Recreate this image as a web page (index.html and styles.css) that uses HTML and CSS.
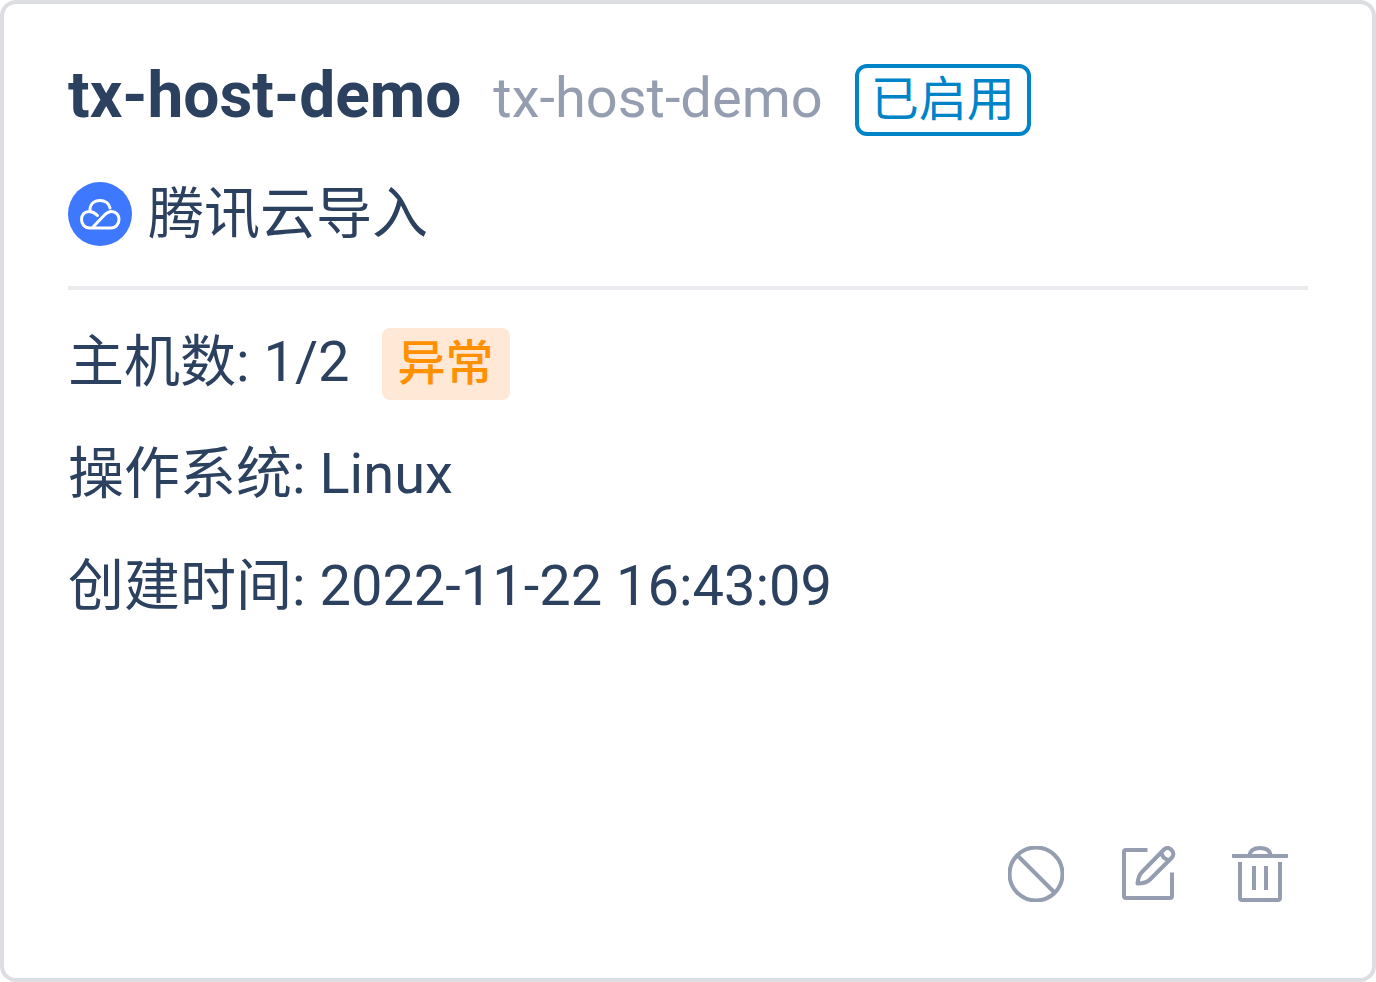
FILE: index.html
```html
<!DOCTYPE html>
<html lang="zh-CN">
<head>
    <meta charset="UTF-8">
    <meta name="viewport" content="width=device-width, initial-scale=1.0">
    <title>tx-host-demo</title>
    <link rel="stylesheet" href="styles.css">
</head>
<body>
    <div class="card">
        <!-- Title -->
        <div class="card-header">
            <div class="names">
                <h1>tx-host-demo</h1>
                <span class="sub-name">tx-host-demo</span>
            </div>
            <span class="tag tag-enabled">已启用</span>
        </div>
        <div class="source">
            <svg class="source-icon" viewBox="0 0 64 64" aria-hidden="true">
                <circle cx="32" cy="32" r="32" fill="#3d78ff"/>
                <path d="M22 28C22 22 26 18.500 32 18.500C37 18.500 41 21.500 42 26M29.500 33.500C27 31 24.500 29.500 21 29.500C16.500 29.500 13.500 33 13.500 37.500C13.500 42.500 17 46 21.500 46H43C47.500 46 51 42.500 51 37.500C51 33 48 29.500 43.500 29.500C40.500 29.500 38.500 31 36.500 33L25 45" fill="none" stroke="#fff" stroke-width="3" stroke-linecap="round" stroke-linejoin="round"/>
            </svg>
            <span>腾讯云导入</span>
        </div>

        <!-- Details -->
        <div class="details">
            <div class="row">
                <span>主机数: 1/2</span>
                <span class="tag tag-warning">异常</span>
            </div>
            <div class="row">操作系统: Linux</div>
            <div class="row">创建时间: 2022-11-22 16:43:09</div>
        </div>

        <!-- Actions -->
        <div class="actions">
            <button type="button" aria-label="停用">
                <svg viewBox="0 0 56 56">
                    <circle cx="28" cy="28" r="26.500"/>
                    <path d="M9.500 9.500L46.500 46.500"/>
                </svg>
            </button>
            <button type="button" aria-label="编辑">
                <svg viewBox="0 0 56 56">
                    <path d="M27.500 4H6Q4 4 4 6V50Q4 52 6 52H50Q52 52 52 50V26.500"/>
                    <path d="M17.500 37.500C18 33 19 29 22 26L43.500 4C46 1.500 49 1.500 51.500 4C54 6.500 54 9.500 51.500 12L30 33.500C27 36.500 22 37.500 17.500 37.500ZM41.500 6C41.500 10.500 45 14 49.500 14"/>
                </svg>
            </button>
            <button type="button" aria-label="删除">
                <svg viewBox="0 0 56 56">
                    <path d="M0 10H56M17 10C18 4.500 22 2 28 2S38 4.500 39 10M8 16V52Q8 54 10 54H46Q48 54 48 52V16M22 20V44M34 20V44"/>
                </svg>
            </button>
        </div>
    </div>
</body>
</html>
```
FILE: styles.css
```css
* {
    box-sizing: border-box;
}
body {
    font-family: Roboto, "Noto Sans CJK SC", sans-serif;
    font-size: 56px;
    line-height: 80px;
    margin: 0;
    background: #fff;
    color: #2c4060;
}
.card {
    display: flex;
    flex-direction: column;
    min-height: 100vh;
    padding: 60px 64px 76px;
    border: 4px solid #dcdee2;
    border-radius: 16px;
    background: #fff;
}
.card-header {
    display: flex;
    align-items: flex-start;
    gap: 32px;
}
.names {
    display: flex;
    align-items: baseline;
    gap: 32px;
    line-height: 64px;
}
h1 {
    margin: 0;
    font-size: 64px;
    font-weight: bold;
}
.sub-name {
    color: #949eb0;
}
.tag {
    height: 72px;
    border-radius: 8px;
    font-size: 48px;
    line-height: 72px;
}
.tag-enabled {
    padding: 0 12px;
    border: 4px solid #0084c8;
    border-radius: 12px;
    color: #0084c8;
    line-height: 64px;
}
.tag-warning {
    margin-top: 4px;
    padding: 0 16px;
    background: #ffe8d5;
    color: #ff9000;
    font-weight: 500;
}
.source {
    display: flex;
    align-items: center;
    gap: 16px;
    margin-top: 38px;
    padding-bottom: 32px;
    border-bottom: 4px solid #ebecf0;
}
.source-icon {
    width: 64px;
    height: 64px;
}
.details {
    display: flex;
    flex-direction: column;
    gap: 32px;
    margin-top: 32px;
}
.row {
    display: flex;
    align-items: center;
    gap: 32px;
    min-height: 80px;
}
.actions {
    display: flex;
    justify-content: flex-end;
    gap: 56px;
    margin-top: auto;
    padding-right: 20px;
}
.actions button {
    width: 56px;
    height: 56px;
    padding: 0;
    border: none;
    background: none;
    color: #949eb0;
    cursor: pointer;
}
.actions svg {
    display: block;
    fill: none;
    stroke: currentColor;
    stroke-width: 4;
    stroke-linejoin: round;
}
.actions button:hover {
    color: #0084c8;
}
```
